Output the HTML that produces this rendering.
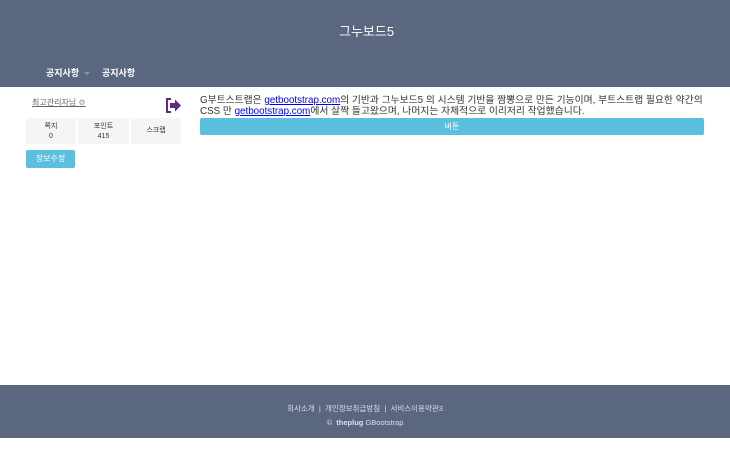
<!DOCTYPE html>
<html><head><meta charset="utf-8"><style>
*{margin:0;padding:0;box-sizing:border-box}
body{width:730px;height:470px;background:#fff;font-family:"Liberation Sans","Noto Sans CJK KR",sans-serif;position:relative;overflow:hidden;color:#333}
.hdr{position:absolute;left:0;top:0;width:730px;height:87px;background:#5a677f}
.title{position:absolute;left:339px;top:21px;color:#fff;font-size:13px}
.nav{position:absolute;top:66px;color:#fff;font-size:9px;font-weight:bold}
.nav .caret{display:inline-block;border-left:3px solid transparent;border-right:3px solid transparent;border-top:3px solid #8a94a8;margin-left:5px;vertical-align:middle}
.admin{position:absolute;left:32px;top:97px;font-size:8px;color:#666;text-decoration:underline}
.box{position:absolute;top:118px;height:26px;background:#f5f5f5;font-size:7px;text-align:center;color:#333;line-height:10px;padding-top:4px}
.btn1{position:absolute;left:26px;top:150px;width:49px;height:18px;background:#5bc0de;border-radius:2px;color:#fff;font-size:8px;text-align:center;line-height:18px}
.txt{position:absolute;left:200px;top:95px;font-size:9.8px;line-height:11px;color:#333;white-space:nowrap}
.txt a{color:#00e;text-decoration:underline}
.btn2{position:absolute;left:200px;top:118px;width:504px;height:17px;background:#5bc0de;border-radius:2px;color:#fff;font-size:8px;text-align:center;line-height:17px}
.ftr{position:absolute;left:0;top:385px;width:730px;height:53px;background:#5a677f;color:#dde;font-size:7.5px;text-align:center}
</style></head><body>
<div class="hdr">
<div class="title">그누보드5</div>
<div class="nav" style="left:46px">공지사항<span class="caret"></span></div>
<div class="nav" style="left:102px">공지사항</div>
</div>
<div class="admin">최고관리자님 <span style="color:#999;text-decoration:none">⚙</span></div>
<svg style="position:absolute;left:165px;top:98px" width="17" height="15" viewBox="0 0 17 15"><path d="M6 1H2v13h4" fill="none" stroke="#5b2a86" stroke-width="2"/><path d="M5 5h5V1.5l6 6-6 6V10H5z" fill="#5b2a86"/></svg>
<div class="box" style="left:26px;width:50px">쪽지<br>0</div>
<div class="box" style="left:78px;width:51px">포인트<br>415</div>
<div class="box" style="left:131px;width:50px;line-height:18px;padding-top:4px">스크랩</div>
<div class="btn1">정보수정</div>
<div class="txt">G부트스트랩은 <a>getbootstrap.com</a>의 기반과 그누보드5 의 시스템 기반을 짬뽕으로 만든 기능이며, 부트스트랩 필요한 약간의<br>CSS 만 <a>getbootstrap.com</a>에서 살짝 들고왔으며, 나머지는 자체적으로 이리저리 작업했습니다.</div>
<div class="btn2">버튼</div>
<div class="ftr">
<div style="margin-top:18px">회사소개 &nbsp;|&nbsp; 개인정보취급방침 &nbsp;|&nbsp; 서비스이용약관3</div>
<div style="margin-top:4px">© &nbsp;<b>theplug</b> GBootstrap</div>
</div>
</body></html>
